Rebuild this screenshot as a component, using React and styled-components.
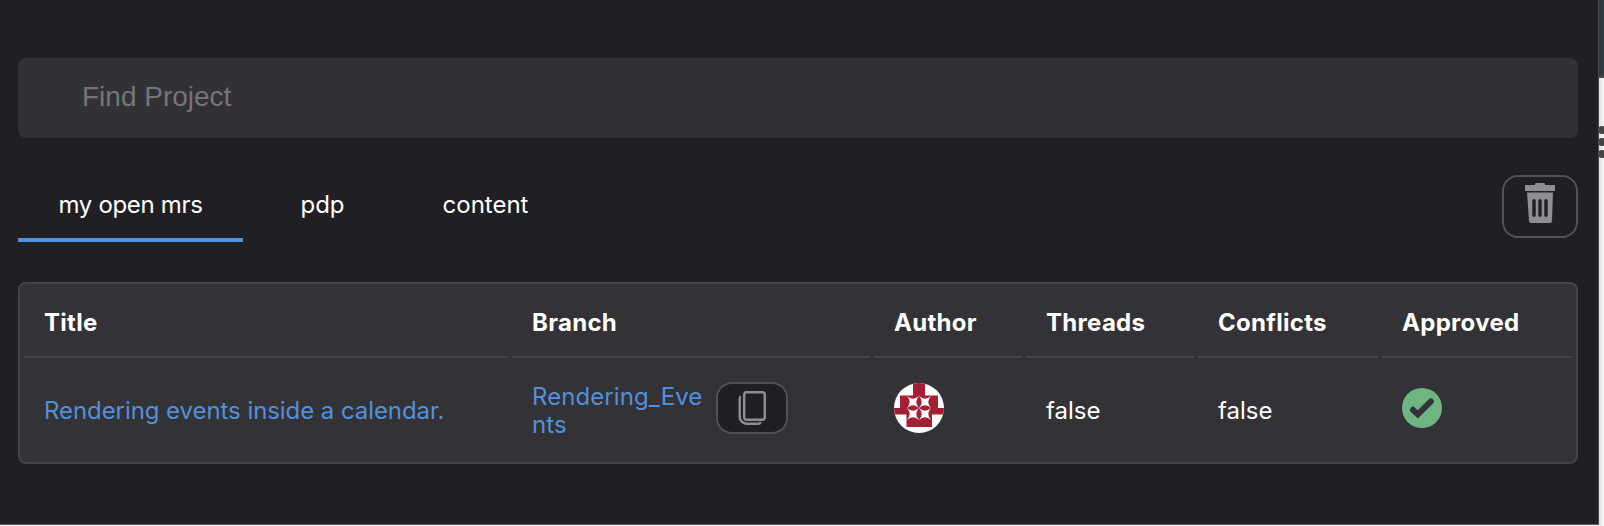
import React from "react";
import styled, { createGlobalStyle } from "styled-components";

const GlobalStyle = createGlobalStyle`
  *, *::before, *::after { box-sizing: border-box; }
  body {
    margin: 0;
    background: #f8f8f8;
    font-family: Inter, "Liberation Sans", sans-serif;
    font-size: 24px;
    color: #fff;
    overflow: hidden;
  }
`;

const Screen = styled.div`
  display: flex;
  width: 1604px;
  height: 526px;
  overflow: hidden;
`;

const Popup = styled.main`
  flex: none;
  width: 1599px;
  height: 525px;
  padding: 58px 20px 0 18px;
  background: #201f24;
  border-right: 1px solid #4b4b4d;
  border-bottom: 1px solid #5b5b5d;
`;

const SearchInput = styled.input`
  display: block;
  width: 1560px;
  height: 80px;
  padding: 0 64px 2px;
  border: 0;
  border-radius: 8px;
  background: #323135;
  color: #fff;
  font: 28px "Liberation Sans", sans-serif;
  outline: none;
  &::placeholder { color: #757575; opacity: 1; }
`;

const Toolbar = styled.div`
  display: flex;
  justify-content: space-between;
  width: 1560px;
  height: 144px;
  padding-top: 37px;
`;

const Tabs = styled.nav`
  display: flex;
  gap: 17px;
`;

const Tab = styled.button`
  width: ${(p) => p.$width}px;
  height: 67px;
  padding: 0 0 4px;
  border: 0;
  border-bottom: 4px solid ${(p) => (p.$active ? "#5291d9" : "transparent")};
  background: none;
  color: #fff;
  font: inherit;
  letter-spacing: ${(p) => p.$tracking || 0}px;
  white-space: nowrap;
`;

const IconButton = styled.button`
  display: flex;
  flex: none;
  align-items: center;
  justify-content: center;
  width: ${(p) => p.$width}px;
  height: ${(p) => p.$height}px;
  padding: 0;
  border: 2px solid #525156;
  border-radius: 16px;
  background: #201f24;
  color: #8e8d92;
  svg { display: block; }
`;

const TrashButton = styled(IconButton)`
  padding-bottom: 7px;
`;

const Table = styled.table`
  width: 1560px;
  height: 182px;
  table-layout: fixed;
  border: 2px solid #454449;
  border-collapse: separate;
  border-spacing: 4px;
  border-radius: 8px;
  background: #333237;
`;

const HeadCell = styled.th`
  height: 70px;
  padding: 0 20px;
  border-bottom: 2px solid #454449;
  text-align: left;
  font-weight: 700;
  letter-spacing: 0.3px;
  white-space: nowrap;
`;

const Cell = styled.td`
  height: 96px;
  padding: 0 20px ${(p) => (p.$graphic ? 4 : 0)}px;
  vertical-align: middle;
  white-space: nowrap;
  svg { display: block; }
`;

const Link = styled.a`
  color: #5291d9;
  text-decoration: none;
  letter-spacing: ${(p) => p.$tracking || 0}px;
`;

const Branch = styled.div`
  display: flex;
  align-items: center;
  gap: 11px;
`;

const BranchLink = styled(Link)`
  width: 173px;
  padding-top: 6px;
  line-height: 28px;
  white-space: normal;
  word-break: break-all;
`;

const PageEdge = styled.aside`
  display: flex;
  flex: 1;
  flex-direction: column;
  background: linear-gradient(to right, #dedede, #fafafa);
`;

const PageHeader = styled.div`
  height: 78px;
  border-bottom: 2px solid #48484a;
  background: linear-gradient(to right, #30343c, #353b45);
`;

const DotsButton = styled.div`
  padding-top: 48px;
  svg { display: block; }
`;

const TrashIcon = () => (
  <svg width="30" height="40" viewBox="0 0 30 40" fill="currentColor">
    <path d="M10 2V1a1 1 0 0 1 1-1h8a1 1 0 0 1 1 1v1h9a1 1 0 0 1 1 1v5H0V3a1 1 0 0 1 1-1Z" />
    <path fillRule="evenodd" d="M2 9.5H28L27 38a2 2 0 0 1-2 2H6a2 2 0 0 1-2-2ZM9 16a1.7 1.7 0 0 0-1.7 1.7v14.6a1.7 1.7 0 0 0 3.4 0V17.7A1.7 1.7 0 0 0 9 16ZM15 16a1.7 1.7 0 0 0-1.7 1.7v14.6a1.7 1.7 0 0 0 3.4 0V17.7A1.7 1.7 0 0 0 15 16ZM21 16a1.7 1.7 0 0 0-1.7 1.7v14.6a1.7 1.7 0 0 0 3.4 0V17.7A1.7 1.7 0 0 0 21 16Z" />
  </svg>
);

const CopyIcon = () => (
  <svg width="28" height="34" viewBox="0 0 28 34" fill="none" stroke="currentColor" strokeWidth="2.4">
    <rect x="6.2" y="1.2" width="20.6" height="27.6" rx="2.5" />
    <path d="M2.7 5.2Q1.7 6 1.7 8V25.7a7 7 0 0 0 7 7H20q2 0 2.8-1.6" />
  </svg>
);

const Avatar = () => (
  <svg width="50" height="50" viewBox="0 0 50 50">
    <clipPath id="avatar-circle"><circle cx="25" cy="25" r="25" /></clipPath>
    <g clipPath="url(#avatar-circle)">
      <rect width="50" height="50" fill="#fff" />
      <path fill="#a41f33" d="M19 0H31V12.5H44V25H50V31.5H38V44H12.5V31.5H0V25H6V12.5H19Z" />
      {[19, 31].flatMap((cx) =>
        [19, 31].map((cy) => (
          <path
            key={`${cx}-${cy}`}
            transform={`translate(${cx} ${cy})`}
            fill="#fff"
            d="M-6-6Q0-.6 6-6Q.6 0 6 6Q0 .6-6 6Q-.6 0-6-6Z"
          />
        ))
      )}
    </g>
  </svg>
);

const ApprovedIcon = () => (
  <svg width="40" height="40" viewBox="0 0 40 40">
    <circle cx="20" cy="20" r="20" fill="#6fb581" />
    <path
      d="M11 21.8 15.8 26.4 28.9 13.4"
      fill="none"
      stroke="#333237"
      strokeWidth="6"
      strokeLinecap="round"
      strokeLinejoin="miter"
    />
  </svg>
);

const DotsIcon = () => (
  <svg width="5" height="32" viewBox="0 0 5 32" fill="#444">
    <circle cx="3" cy="4" r="4" />
    <circle cx="3" cy="16" r="4" />
    <circle cx="3" cy="28" r="4" />
  </svg>
);

export default function App() {
  return (
    <>
      <GlobalStyle />
      <Screen>
        <Popup>
          <SearchInput placeholder="Find Project" />
          <Toolbar>
            <Tabs>
              <Tab $active $width={225} $tracking={-0.32}>my open mrs</Tab>
              <Tab $width={125}>pdp</Tab>
              <Tab $width={167}>content</Tab>
            </Tabs>
            <TrashButton $width={76} $height={63} aria-label="Delete">
              <TrashIcon />
            </TrashButton>
          </Toolbar>
          <Table>
            <colgroup>
              <col width="484" />
              <col width="358" />
              <col width="148" />
              <col width="168" />
              <col width="180" />
              <col width="190" />
            </colgroup>
            <thead>
              <tr>
                <HeadCell>Title</HeadCell>
                <HeadCell>Branch</HeadCell>
                <HeadCell>Author</HeadCell>
                <HeadCell>Threads</HeadCell>
                <HeadCell>Conflicts</HeadCell>
                <HeadCell>Approved</HeadCell>
              </tr>
            </thead>
            <tbody>
              <tr>
                <Cell><Link $tracking={-0.07}>Rendering events inside a calendar.</Link></Cell>
                <Cell $graphic>
                  <Branch>
                    <BranchLink $tracking={0.08}>Rendering_Events</BranchLink>
                    <IconButton $width={72} $height={52} aria-label="Copy branch">
                      <CopyIcon />
                    </IconButton>
                  </Branch>
                </Cell>
                <Cell $graphic><Avatar /></Cell>
                <Cell>false</Cell>
                <Cell>false</Cell>
                <Cell $graphic><ApprovedIcon /></Cell>
              </tr>
            </tbody>
          </Table>
        </Popup>
        <PageEdge>
          <PageHeader />
          <DotsButton><DotsIcon /></DotsButton>
        </PageEdge>
      </Screen>
    </>
  );
}
